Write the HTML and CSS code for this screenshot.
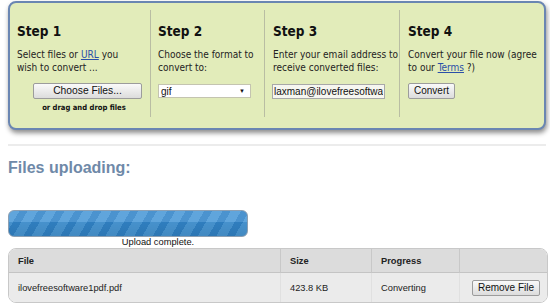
FILE: index.html
```html
<!DOCTYPE html>
<html lang="en">

<head>
  <meta charset="UTF-8" />
  <title>Convert files</title>
  <link rel="stylesheet" href="styles.css">
</head>

<body>
  <div class="page">
    <!-- the four steps -->
    <div class="steps">
      <div class="step step1">
        <h2>Step 1</h2>
        <p>Select files or <a href="#">URL</a> you<br />wish to convert ...</p>
        <div class="pick">
          <button class="btn choose">Choose Files...</button>
          <div class="drag">or drag and drop files</div>
        </div>
      </div>
      <div class="step step2">
        <h2>Step 2</h2>
        <p>Choose the format to<br />convert to:</p>
        <div class="select">
          <span>gif</span>
          <span class="arrow">&#9660;</span>
        </div>
      </div>
      <div class="step step3">
        <h2>Step 3</h2>
        <p>Enter your email address to<br />receive converted files:</p>
        <input class="email" type="text" value="laxman@ilovefreesoftware.com" />
      </div>
      <div class="step step4">
        <h2>Step 4</h2>
        <p>Convert your file now (agree<br />to our <a href="#">Terms</a> ?)</p>
        <button class="btn convert">Convert</button>
      </div>
    </div>

    <div class="sep"></div>

    <h3 class="uploading">Files uploading:</h3>

    <!-- upload progress -->
    <div class="progress">
      <div class="bar"></div>
      <div class="status">Upload complete.</div>
    </div>

    <table class="files">
      <thead>
        <tr>
          <th class="c-file">File</th>
          <th class="c-size">Size</th>
          <th class="c-prog">Progress</th>
          <th class="c-act"></th>
        </tr>
      </thead>
      <tbody>
        <tr>
          <td>ilovefreesoftware1pdf.pdf</td>
          <td>423.8 KB</td>
          <td>Converting</td>
          <td class="act"><button class="btn remove">Remove File</button></td>
        </tr>
      </tbody>
    </table>
  </div>
</body>

</html>
```

FILE: styles.css
```css
* {
  margin: 0;
  padding: 0;
  box-sizing: border-box;
}

body {
  background: #fff;
  font-family: "Liberation Sans", Arial, sans-serif;
  color: #111;
}

.page {
  padding: 1px 0 0 8px;
}

/* step panel */
.steps {
  display: flex;
  width: 538px;
  height: 129px;
  padding: 7px 0 11px;
  background: #e2ecba;
  border: 2px solid #6a86b2;
  border-radius: 8px;
  box-shadow: 1px 3px 5px rgba(0, 0, 0, 0.45);
}

.step {
  padding: 0 2px 0 7px;
  border-right: 1px solid #b9bda3;
  font-family: "DejaVu Sans Condensed", "DejaVu Sans", sans-serif;
  font-stretch: condensed;
}

.step1 {
  width: 141px;
}

.step2 {
  width: 114px;
}

.step3 {
  width: 135px;
  padding-left: 8px;
}

.step4 {
  width: 144px;
  padding-left: 8px;
  border-right: none;
}

.step h2 {
  margin-top: 13px;
  font-size: 13.5px;
  line-height: 16px;
  font-weight: bold;
  color: #111;
}

.step p {
  margin-top: 9px;
  font-size: 10px;
  line-height: 13px;
  color: #222;
  white-space: nowrap;
}

.step a {
  color: #2a4fa8;
}

.btn {
  font-family: "Liberation Sans", Arial, sans-serif;
  font-size: 10px;
  color: #111;
  background: linear-gradient(#fafafa, #dcdcdc);
  border: 1px solid #9c9c9c;
  border-radius: 2px;
  height: 16px;
  line-height: 14px;
}

.pick {
  margin-top: 9px;
  width: 134px;
  text-align: center;
}

.choose {
  width: 109px;
  margin-left: 16px;
  font-size: 10.3px;
  display: block;
}

.drag {
  margin-top: 4px;
  font-size: 7.6px;
  font-weight: bold;
  color: #111;
}

.select {
  margin-top: 10px;
  width: 93px;
  height: 14px;
  display: flex;
  justify-content: space-between;
  align-items: center;
  padding: 0 5px 0 2px;
  background: #fff;
  border: 1px solid #c4c4b0;
  font-family: "Liberation Sans", Arial, sans-serif;
  font-size: 10px;
}

.select .arrow {
  font-size: 6px;
  color: #111;
}

.email {
  margin-top: 10px;
  margin-left: -1px;
  width: 113px;
  height: 15px;
  padding: 0 1px;
  border: 1px solid #a8a8a8;
  background: #f6f6f0;
  font-family: "Liberation Sans", Arial, sans-serif;
  font-size: 10px;
  color: #111;
  outline: none;
}

.convert {
  margin-top: 9px;
  width: 47px;
}

.sep {
  width: 538px;
  height: 2px;
  margin-top: 14px;
  background: #ececec;
}

.uploading {
  margin-top: 13px;
  font-size: 16px;
  line-height: 18px;
  color: #6f89a8;
}

/* progress bar */
.progress {
  width: 300px;
  margin-top: 33px;
}

.bar {
  width: 240px;
  height: 27px;
  border: 1px solid #8c9fb2;
  border-radius: 6px;
  background:
    linear-gradient(rgba(255, 255, 255, 0.12) 0, rgba(255, 255, 255, 0.12) 45%, rgba(0, 0, 0, 0.05) 45%, rgba(0, 0, 0, 0.1) 100%),
    repeating-linear-gradient(120deg, #4a99d7 0, #4a99d7 9px, #3284c8 9px, #3284c8 16px);
}

.status {
  text-align: center;
  font-size: 9.3px;
  line-height: 11px;
  color: #111;
}

/* file table */
.files {
  width: 540px;
  border-collapse: separate;
  border-spacing: 0;
  border: 1px solid #c8c8c8;
  border-radius: 8px;
  font-size: 9.3px;
  color: #222;
}

.files th {
  height: 24px;
  text-align: left;
  padding-left: 9px;
  background: #dcdcdc;
  border-bottom: 1px solid #c4c4c4;
  border-left: 1px solid #c8c8c8;
  font-weight: bold;
}

.files th:first-child {
  border-left: none;
  border-top-left-radius: 7px;
}

.files th:last-child {
  border-top-right-radius: 7px;
}

.files td {
  height: 29px;
  padding-left: 9px;
  background: #ebebeb;
  border-left: 1px solid #e0e0e0;
}

.files td:first-child {
  border-left: none;
  border-bottom-left-radius: 7px;
}

.files td:last-child {
  border-bottom-right-radius: 7px;
}

.c-file {
  width: 271px;
}

.c-size {
  width: 91px;
}

.c-prog {
  width: 88px;
}

.files td.act {
  padding-left: 12px;
}

.remove {
  width: 68px;
}
```
